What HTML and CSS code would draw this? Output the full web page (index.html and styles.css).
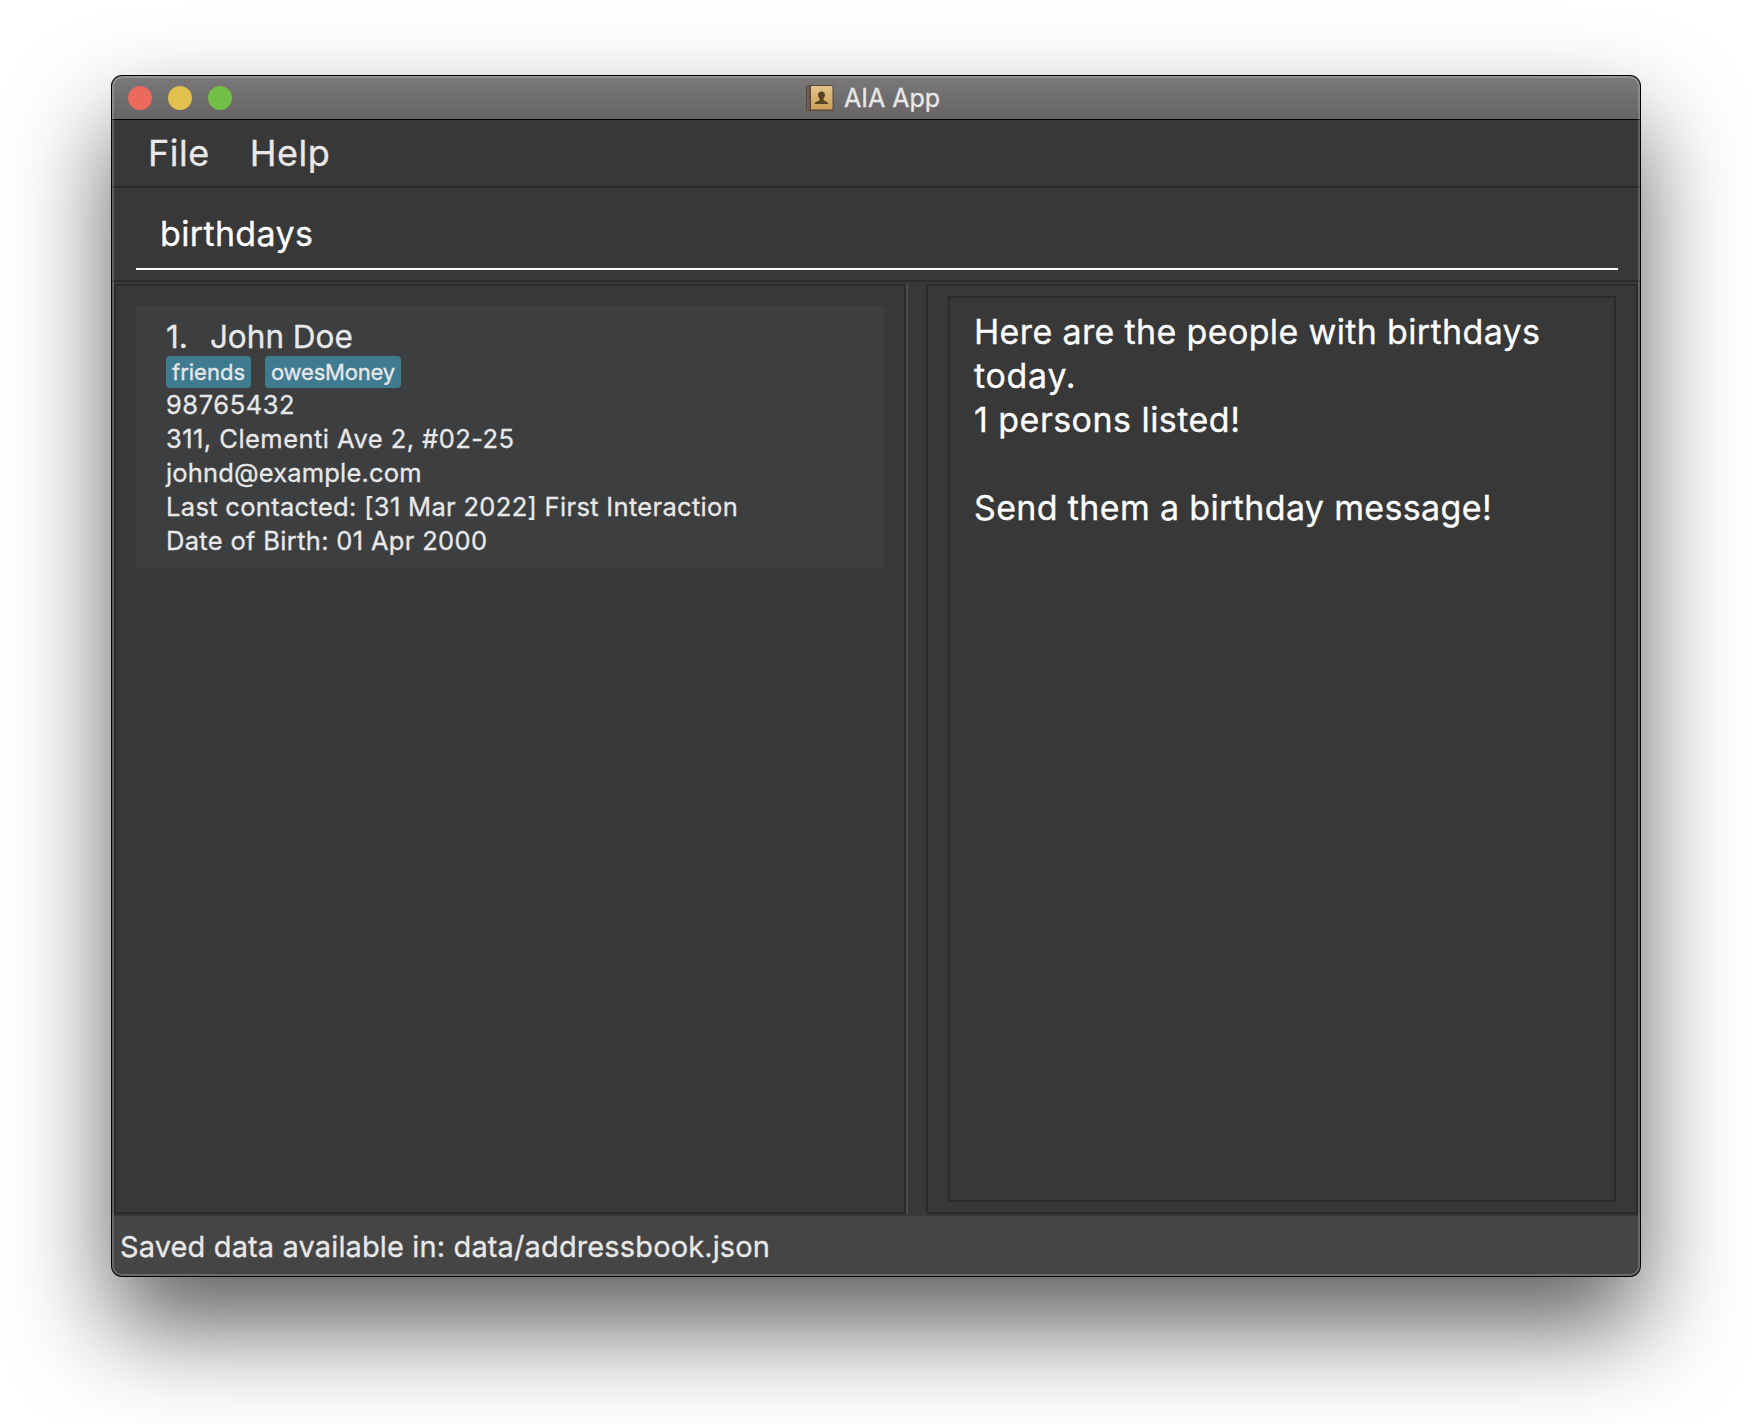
FILE: index.html
```html
<!DOCTYPE html>
<html lang="en">
<head>
<meta charset="utf-8">
<title>AIA App</title>
<link rel="stylesheet" href="styles.css">
</head>
<body>
<main class="window">
  <header class="titlebar">
    <div class="lights">
      <span class="light light-close"></span>
      <span class="light light-minimize"></span>
      <span class="light light-zoom"></span>
    </div>
    <div class="title">
      <svg class="book" width="28" height="28" viewBox="0 0 28 28">
        <defs>
          <linearGradient id="cover" x1="0" y1="0" x2="0" y2="1">
            <stop offset="0" stop-color="#e3c48c"/>
            <stop offset="1" stop-color="#cf9f55"/>
          </linearGradient>
        </defs>
        <rect x="0" y="1" width="27.500" height="26" rx="1.500" fill="#57473b"/>
        <rect x="1" y="1.500" width="2.500" height="25" fill="#6d5f58"/>
        <rect x="5" y="2" width="21.500" height="23.500" fill="url(#cover)"/>
        <path d="M15.500 7.500c-2.300 0-3.500 1.500-3.500 3.600 0 1.600.7 2.600 1.500 3.400v1.700c-.8 1-4.700 1-4.900 3.800h13.800c-.2-2.800-4.100-2.800-4.900-3.800v-1.700c.8-.8 1.500-1.800 1.500-3.400 0-2.100-1.200-3.600-3.500-3.600z" fill="#594526"/>
      </svg>
      <span>AIA App</span>
    </div>
  </header>
  <nav class="menubar"><span>File</span><span>Help</span></nav>
  <section class="command"><div class="field">birthdays</div></section>
  <section class="panes">
    <div class="list">
      <article class="card">
        <h1 class="name"><span>1.</span><span>John Doe</span></h1>
        <div class="tags"><span class="tag">friends</span><span class="tag tag-owes">owesMoney</span></div>
        <p class="row phone">98765432</p>
        <p class="row address">311, Clementi Ave 2, #02-25</p>
        <p class="row email">johnd@example.com</p>
        <p class="row">Last contacted: [31 Mar 2022] First Interaction</p>
        <p class="row">Date of Birth: 01 Apr 2000</p>
      </article>
    </div>
    <div class="divider"></div>
    <div class="result">
      <div class="message">Here are the people with birthdays<br><span class="today">today.</span><br><span class="count">1 persons listed!</span><br><br>Send them a birthday message!</div>
    </div>
  </section>
  <footer class="status">Saved data available in: data/addressbook.json</footer>
</main>
</body>
</html>
```
FILE: styles.css
```css
* { box-sizing: border-box; }

body {
  margin: 0;
  padding: 76px 112px 148px;
  background: #fff;
  color: #e8e8e8;
  font-family: Inter, "Liberation Sans", sans-serif;
  -webkit-text-stroke: 0.3px;
}

.window {
  position: relative;
  display: flex;
  flex-direction: column;
  width: 1528px;
  height: 1200px;
  border-radius: 10px;
  background: #383838;
  box-shadow: 0 0 0 1px #000, 0 50px 100px rgba(0, 0, 0, 0.64);
  overflow: hidden;
  white-space: nowrap;
}

/* Light rim drawn over the window's edge */
.window::after {
  content: "";
  position: absolute;
  inset: 0;
  border: 2px solid rgba(255, 255, 255, 0.2);
  border-radius: 10px;
  pointer-events: none;
}

.titlebar {
  display: grid;
  grid-template-columns: 1fr auto 1fr;
  align-items: center;
  height: 44px;
  padding: 0 19px 0 16px;
  border-bottom: 1px solid #000;
  background: linear-gradient(#7b797a, #656364);
}

.lights { display: flex; gap: 16px; }
.light { width: 24px; height: 24px; border-radius: 50%; }
.light-close { background: #ec695e; }
.light-minimize { background: #e1c04d; }
.light-zoom { background: #71bf46; }

.title {
  display: flex;
  align-items: center;
  gap: 10px;
  margin-left: -3px;
  font-size: 25px;
  line-height: 41px;
}
.title span { padding-top: 2px; }

.menubar {
  display: flex;
  gap: 40px;
  height: 68px;
  padding: 0 36px;
  border-bottom: 2px solid #2b2b2b;
  font-size: 36px;
  letter-spacing: 0.5px;
  line-height: 66px;
}

.command {
  height: 94px;
  padding: 22px 22px 0 24px;
  border-bottom: 2px solid #2b2b2b;
}
.field {
  height: 60px;
  padding: 0 24px;
  border-bottom: 2px solid #fff;
  color: #fff;
  font-size: 34px;
  letter-spacing: 0.35px;
  line-height: 48px;
}

.panes {
  display: flex;
  flex: none;
  height: 934px;
  padding: 2px;
}
.list {
  width: 792px;
  padding: 20px;
  border: 2px solid #2b2b2b;
}
.divider {
  width: 20px;
  border-left: 2px solid #4c4c4c;
}
.result {
  flex: 1;
  padding: 10px 20px;
  border: 2px solid #2b2b2b;
}
.message {
  height: 100%;
  padding: 12px 24px;
  border: 2px solid #2b2b2b;
  color: #fff;
  font-size: 34px;
  letter-spacing: 0.35px;
  line-height: 44px;
}
.today { letter-spacing: 0.7px; }
.count { letter-spacing: 0.47px; }

.card {
  height: 262px;
  padding: 10px 30px;
  background: #3c3e3f;
}
.name {
  display: flex;
  gap: 22px;
  height: 40px;
  margin: 0;
  font-size: 31.5px;
  font-weight: 400;
  line-height: 42px;
}
.tags { display: flex; gap: 14px; height: 32px; }
.tag {
  padding: 0 6px;
  border-radius: 4px;
  background: #3e7b91;
  font-size: 22px;
  line-height: 32px;
}
.tag-owes { letter-spacing: -0.2px; }
.row {
  margin: 0;
  font-size: 25.5px;
  letter-spacing: 0.32px;
  line-height: 34px;
}
.phone { letter-spacing: 0.55px; }
.address { letter-spacing: 0.46px; }
.email { letter-spacing: 0.16px; }

.status {
  flex: none;
  height: 60px;
  padding: 0 8px;
  background: #454545;
  font-size: 29px;
  letter-spacing: 0.13px;
  line-height: 62px;
}
```
